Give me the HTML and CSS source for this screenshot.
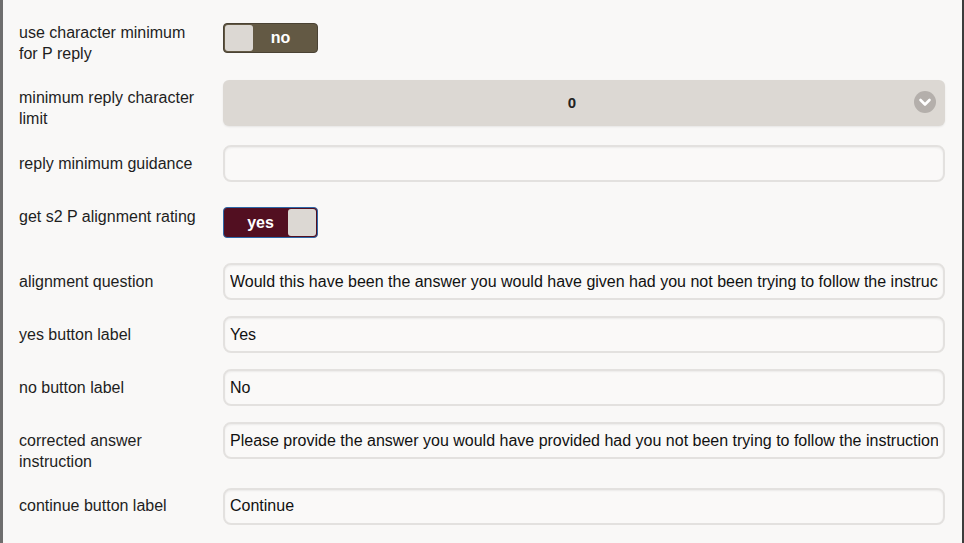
FILE: index.html
```html
<!DOCTYPE html>
<html>
<head>
<meta charset="utf-8">
<link rel="stylesheet" href="styles.css">
</head>
<body>
<div class="frame">
  <div class="form">
    <div class="row">
      <div class="label">use character minimum for P reply</div>
      <div class="toggle toggle-off"><span class="knob"></span><span class="ttext">no</span></div>
    </div>
    <div class="row">
      <div class="label">minimum reply character limit</div>
      <div class="select"><span class="sval">0</span>
        <span class="chev"><svg width="22" height="22" viewBox="0 0 22 22"><circle cx="11" cy="11" r="11" fill="#b4afab"/><path d="M6.5 9 L11 13.5 L15.5 9" fill="none" stroke="#fff" stroke-width="2.6" stroke-linecap="round" stroke-linejoin="round"/></svg></span>
      </div>
    </div>
    <div class="row">
      <div class="label">reply minimum guidance</div>
      <input class="field" type="text" value="">
    </div>
    <div class="row">
      <div class="label">get s2 P alignment rating</div>
      <div class="toggle toggle-on"><span class="ttext">yes</span><span class="knob"></span></div>
    </div>
    <div class="row">
      <div class="label">alignment question</div>
      <input class="field" type="text" value="Would this have been the answer you would have given had you not been trying to follow the instructions?">
    </div>
    <div class="row">
      <div class="label">yes button label</div>
      <input class="field" type="text" value="Yes">
    </div>
    <div class="row">
      <div class="label">no button label</div>
      <input class="field" type="text" value="No">
    </div>
    <div class="row">
      <div class="label">corrected answer instruction</div>
      <input class="field" type="text" value="Please provide the answer you would have provided had you not been trying to follow the instructions.">
    </div>
    <div class="row">
      <div class="label">continue button label</div>
      <input class="field" type="text" value="Continue">
    </div>
  </div>
</div>
</body>
</html>
```
FILE: styles.css
```css
html, body {
  margin: 0;
  padding: 0;
  background: #f9f8f7;
}
body {
  font-family: "Liberation Sans", Arial, sans-serif;
  font-size: 16px;
  color: #1e1e1e;
}
.frame {
  width: 964px;
  height: 543px;
  box-sizing: border-box;
  border-left: 3px solid #6e6e6e;
  border-right: 2px solid #3c3c3c;
  overflow: hidden;
}
.form {
  padding: 14px 17px 0 16px;
}
.row {
  display: flex;
  align-items: flex-start;
  margin-bottom: 16px;
}
.label {
  width: 180px;
  flex: none;
  margin-right: 24px;
  line-height: 21px;
  padding-top: 7.5px;
}
.toggle {
  flex: none;
  margin-top: 9px;
  margin-bottom: 9px;
  width: 95px;
  height: 31px;
  box-sizing: border-box;
  border-radius: 4px;
  display: flex;
  align-items: stretch;
  padding: 1px;
}
.toggle-off {
  background: #635944;
  border: 1px solid #4a4234;
  height: 30px;
}
.toggle-off .ttext {
  padding-right: 8px;
}
.toggle-on {
  background: #520f21;
  border: 1px solid #2d68a8;
}
.toggle-on .ttext {
  padding-left: 8px;
}
.knob {
  width: 28px;
  background: #dcd8d3;
  border-radius: 3px;
  flex: none;
}
.ttext {
  flex: 1;
  color: #fff;
  font-weight: bold;
  font-size: 16px;
  display: flex;
  align-items: center;
  justify-content: center;
}
.select {
  flex: 1;
  height: 46px;
  box-sizing: border-box;
  padding-right: 24px;
  background: #dcd8d3;
  border-radius: 6px;
  box-shadow: 0 1px 2px rgba(0,0,0,0.08);
  display: flex;
  align-items: center;
  justify-content: center;
  position: relative;
}
.sval {
  font-weight: bold;
  font-size: 15px;
  color: #222;
}
.chev {
  position: absolute;
  right: 9px;
  top: 11px;
  width: 22px;
  height: 22px;
}
.field {
  flex: 1;
  min-width: 0;
  height: 37px;
  box-sizing: border-box;
  border: 2px solid #e3e1df;
  border-radius: 8px;
  background: #faf9f8;
  box-shadow: inset 0 1px 2px rgba(0,0,0,0.06);
  font-family: "Liberation Sans", Arial, sans-serif;
  font-size: 16px;
  color: #111;
  padding: 0 5px;
  margin: 0;
  outline: none;
}
```
